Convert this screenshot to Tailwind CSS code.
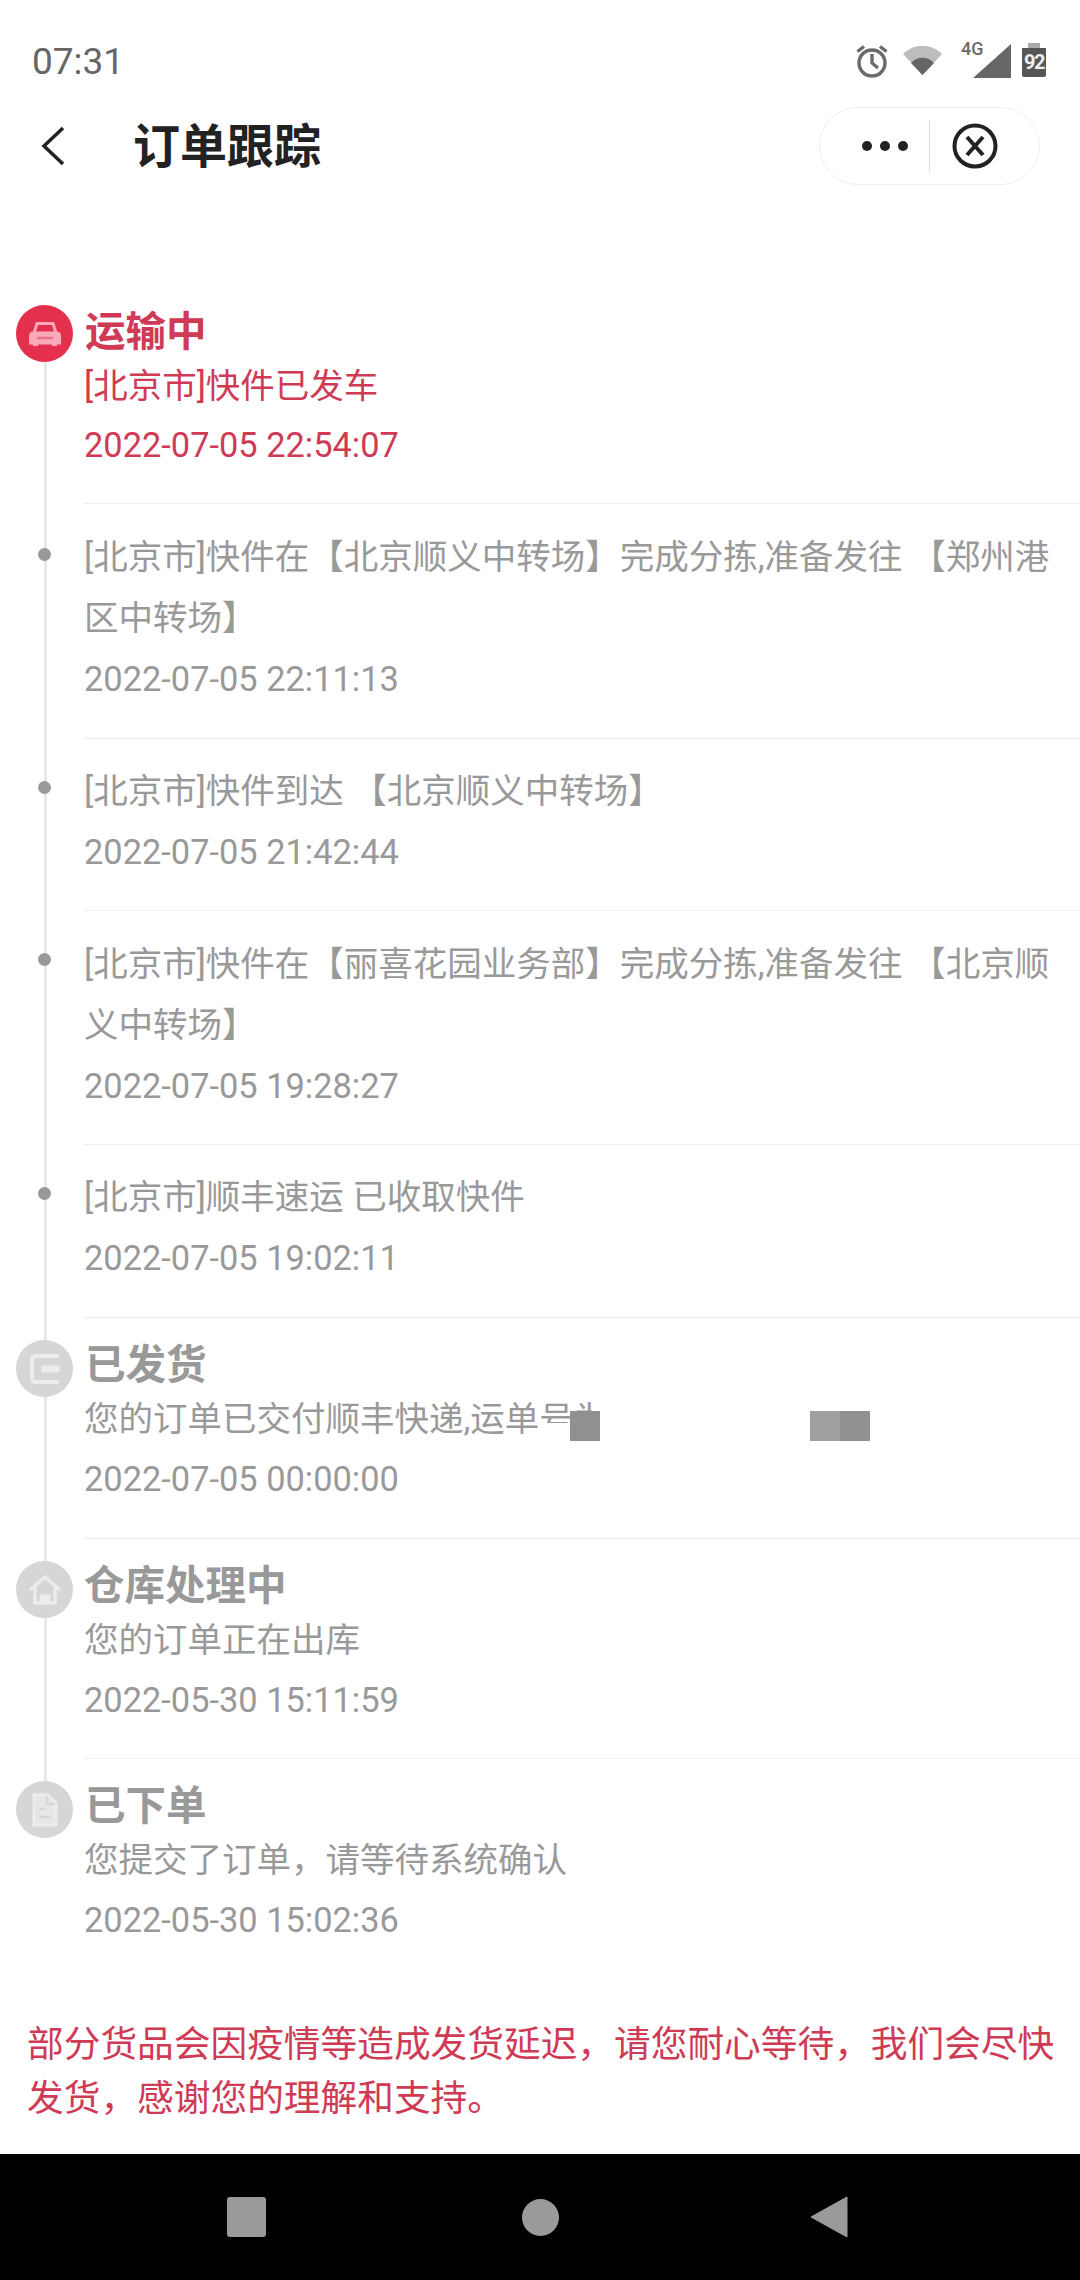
<!DOCTYPE html>
<html lang="zh-CN">
<head>
  <meta charset="UTF-8" />
  <meta name="viewport" content="width=device-width, initial-scale=1.0" />
  <title>订单跟踪</title>
  <script src="https://cdn.jsdelivr.net/npm/@tailwindcss/browser@4"></script>
</head>
<body class="bg-white">
  <div class="flex flex-col h-[2280px] w-[1080px] overflow-hidden font-['Roboto','Noto_Sans_CJK_SC',sans-serif]">

    <!-- status bar -->
    <div class="flex justify-between h-[96px] pl-[32px] pr-[34px] pt-[42px]">
      <span class="text-[37px] leading-[40px] text-[#666]">07:31</span>
      <div class="flex items-start">
        <svg class="w-[32px] h-[34px] mt-[2px]" viewBox="0 0 32 34" fill="none" stroke="#6a6a6a" stroke-width="3.4">
          <circle cx="16" cy="19" r="13" />
          <path d="M16 10v9l6 5M1.5 7.5 8 2.5M30.500 7.500 24 2.500" />
        </svg>
        <svg class="w-[39px] h-[30px] mt-[3px] ml-[15px]" viewBox="0 0 39 30">
          <path d="M0 9C11 -2 28 -2 39 9L19.500 30z" fill="#bdbdbd" />
          <path d="M8 18C14 11 25 11 31 18L19.500 30z" fill="#666" />
        </svg>
        <div class="relative w-[50px] h-[36px] ml-[19px]">
          <span class="absolute left-0 top-[-2px] text-[18px] leading-[18px] font-medium text-[#6a6a6a]">4G</span>
          <svg class="absolute right-0 top-[2px] w-[38px] h-[34px]" viewBox="0 0 38 34">
            <path d="M38 0V34H0z" fill="#666" />
          </svg>
        </div>
        <div class="flex flex-col items-center w-[24px] ml-[11px] mt-[1px]">
          <div class="w-[12px] h-[5px] bg-[#aaa]"></div>
          <div class="flex justify-center w-[24px] h-[29px] pt-[2px] rounded-b-[2px] bg-[#555] text-[20px] leading-[24px] font-bold tracking-[-1.5px] text-[#eee]">92</div>
        </div>
      </div>
    </div>

    <!-- title bar -->
    <div class="flex items-center h-[100px] pl-[41px]">
      <svg class="w-[24px] h-[40px]" viewBox="0 0 24 40" fill="none" stroke="#222" stroke-width="3.500">
        <path d="M22 2 3 20l19 18" />
      </svg>
      <h1 class="ml-[68px] pt-[2px] text-[47px] leading-[60px] font-bold text-[#222]">订单跟踪</h1>
      <div class="flex items-center ml-auto mr-[40px] w-[221px] h-[78px] rounded-full border border-[#eeeeee]">
        <div class="flex items-center gap-[8px] ml-[42px]">
          <span class="w-[10px] h-[10px] rounded-full bg-[#222]"></span>
          <span class="w-[10px] h-[10px] rounded-full bg-[#222]"></span>
          <span class="w-[10px] h-[10px] rounded-full bg-[#222]"></span>
        </div>
        <div class="w-px h-[52px] ml-[21px] bg-[#ddd]"></div>
        <svg class="w-[46px] h-[46px] ml-[22px]" viewBox="0 0 46 46" fill="none" stroke="#222" stroke-width="4">
          <circle cx="23" cy="23" r="20.500" />
          <path d="M15 14 31 32M31 14 15 32" />
        </svg>
      </div>
    </div>

    <!-- timeline -->
    <div class="relative mt-[86px]">
      <div class="absolute left-[44px] top-[60px] w-[3px] h-[1440px] bg-[#e8e8e8]"></div>

      <div class="relative flex">
        <div class="w-[84px] shrink-0 pl-[16px] pt-[23px]">
          <div class="flex items-center justify-center w-[57px] h-[57px] rounded-full bg-[#e5304d]">
            <svg class="w-[34px] h-[26px] blur-[0.6px]" viewBox="0 0 34 26" fill="none" stroke="#f7aab7" stroke-width="3">
              <path d="M6 12 9 2.500h16L28 12" />
              <path d="M2.500 15q0-3 3-3h23q3 0 3 3v7h-29z" fill="#f7aab7" />
              <path d="M9 17h16" stroke="#e8708a" stroke-width="2.500" />
              <path d="M5 23h5M24 23h5" stroke-width="4" />
            </svg>
          </div>
        </div>
        <div class="flex-1 pt-[25px] pb-[27px] pr-[25px] border-b border-[#eeeeee] text-[#cf3a55]">
          <div class="pl-px text-[40.500px] leading-[50px] font-bold">运输中</div>
          <div class="text-[34.500px] leading-[58px]">[北京市]快件已发车</div>
          <div class="text-[34.400px] leading-[61px]">2022-07-05 22:54:07</div>
        </div>
      </div>

      <div class="relative flex">
        <div class="w-[84px] shrink-0 pl-[38px] pt-[44px]"><div class="w-[13px] h-[13px] rounded-full bg-[#999]"></div></div>
        <div class="flex-1 pt-[23px] pb-[28px] pr-[25px] border-b border-[#eeeeee] text-[#999]">
          <div class="text-[34.500px] leading-[61px]">[北京市]快件在【北京顺义中转场】完成分拣,准备发往 【郑州港区中转场】</div>
          <div class="text-[34.400px] leading-[61px]">2022-07-05 22:11:13</div>
        </div>
      </div>

      <div class="relative flex">
        <div class="w-[84px] shrink-0 pl-[38px] pt-[42px]"><div class="w-[13px] h-[13px] rounded-full bg-[#999]"></div></div>
        <div class="flex-1 pt-[22px] pb-[27px] pr-[25px] border-b border-[#eeeeee] text-[#999]">
          <div class="text-[34.500px] leading-[61px]">[北京市]快件到达 【北京顺义中转场】</div>
          <div class="text-[34.400px] leading-[61px]">2022-07-05 21:42:44</div>
        </div>
      </div>

      <div class="relative flex">
        <div class="w-[84px] shrink-0 pl-[38px] pt-[42px]"><div class="w-[13px] h-[13px] rounded-full bg-[#999]"></div></div>
        <div class="flex-1 pt-[23px] pb-[27px] pr-[25px] border-b border-[#eeeeee] text-[#999]">
          <div class="text-[34.500px] leading-[61px]">[北京市]快件在【丽喜花园业务部】完成分拣,准备发往 【北京顺义中转场】</div>
          <div class="text-[34.400px] leading-[61px]">2022-07-05 19:28:27</div>
        </div>
      </div>

      <div class="relative flex">
        <div class="w-[84px] shrink-0 pl-[38px] pt-[42px]"><div class="w-[13px] h-[13px] rounded-full bg-[#999]"></div></div>
        <div class="flex-1 pt-[22px] pb-[28px] pr-[25px] border-b border-[#eeeeee] text-[#999]">
          <div class="text-[34.500px] leading-[61px]">[北京市]顺丰速运 已收取快件</div>
          <div class="text-[34.400px] leading-[61px]">2022-07-05 19:02:11</div>
        </div>
      </div>

      <div class="relative flex">
        <div class="w-[84px] shrink-0 pl-[16px] pt-[22px]">
          <div class="flex items-center justify-center w-[57px] h-[57px] rounded-full bg-[#d6d6d6]">
            <svg class="w-[32px] h-[32px] blur-[0.6px]" viewBox="0 0 32 32" fill="none" stroke="#ececec" stroke-width="4">
              <path d="M30 3H7Q3 3 3 7v18q0 4 4 4h23" />
              <path d="M13 13h17v6H13z" fill="#ececec" stroke-width="1" />
            </svg>
          </div>
        </div>
        <div class="flex-1 pt-[23px] pb-[28px] pr-[25px] border-b border-[#eeeeee] text-[#999]">
          <div class="pl-px text-[40.500px] leading-[48px] font-bold">已发货</div>
          <div class="relative text-[34.500px] leading-[60px]">
            您的订单已交付顺丰快递,运单号为
            <!-- masked waybill number -->
            <div class="absolute left-[456px] top-[34px] w-[30px] h-[26px] bg-white"></div>
            <div class="absolute left-[508px] top-0 w-[40px] h-[60px] bg-white"></div>
            <div class="absolute left-[486px] top-[22px] w-[30px] h-[30px] bg-[#8e9091]"></div>
            <div class="absolute left-[726px] top-[22px] w-[30px] h-[30px] bg-[#9f9f9f]"></div>
            <div class="absolute left-[756px] top-[22px] w-[30px] h-[30px] bg-[#8f9192]"></div>
          </div>
          <div class="text-[34.400px] leading-[61px]">2022-07-05 00:00:00</div>
        </div>
      </div>

      <div class="relative flex">
        <div class="w-[84px] shrink-0 pl-[16px] pt-[22px]">
          <div class="flex items-center justify-center w-[57px] h-[57px] rounded-full bg-[#d6d6d6]">
            <svg class="w-[34px] h-[30px] blur-[0.6px]" viewBox="0 0 34 30" fill="none" stroke="#ececec" stroke-width="3.500">
              <path d="M2 15 17 2l15 13M7 12v16h20V12" />
              <path d="M12 20h10v8H12z" fill="#ececec" stroke-width="1" />
            </svg>
          </div>
        </div>
        <div class="flex-1 pt-[23px] pb-[27px] pr-[25px] border-b border-[#eeeeee] text-[#999]">
          <div class="text-[40.500px] leading-[48px] font-bold">仓库处理中</div>
          <div class="text-[34.500px] leading-[60px]">您的订单正在出库</div>
          <div class="text-[34.400px] leading-[61px]">2022-05-30 15:11:59</div>
        </div>
      </div>

      <div class="relative flex">
        <div class="w-[84px] shrink-0 pl-[16px] pt-[22px]">
          <div class="flex items-center justify-center w-[57px] h-[57px] rounded-full bg-[#d6d6d6]">
            <svg class="w-[26px] h-[34px] blur-[0.6px]" viewBox="0 0 26 34" fill="none" stroke="#ececec" stroke-width="3">
              <path d="M2 2h14l8 8v22H2z" fill="#e6e6e6" />
              <path d="M15 3v8h8M7 16h6M7 24h12" stroke="#d6d6d6" stroke-width="2.500" />
            </svg>
          </div>
        </div>
        <div class="flex-1 pt-[23px] pb-[29px] pr-[25px] text-[#999]">
          <div class="pl-px text-[40.500px] leading-[48px] font-bold">已下单</div>
          <div class="text-[34.500px] leading-[60px]">您提交了订单，请等待系统确认</div>
          <div class="text-[34.400px] leading-[61px]">2022-05-30 15:02:36</div>
        </div>
      </div>
    </div>

    <!-- notice -->
    <p class="pt-[38px] pl-[27px] pr-[20px] text-[36.700px] leading-[54px] text-[#cf3a55]">部分货品会因疫情等造成发货延迟，请您耐心等待，我们会尽快发货，感谢您的理解和支持。</p>

    <!-- android nav bar -->
    <div class="relative flex items-center h-[126px] mt-auto bg-black">
      <div class="ml-[227px] w-[39px] h-[40px] rounded-[3px] bg-[#9a9a9a]"></div>
      <div class="ml-[256px] w-[37px] h-[37px] rounded-full bg-[#9a9a9a]"></div>
      <svg class="ml-[251px] w-[38px] h-[42px]" viewBox="0 0 38 42">
        <path d="M37 1 1 21l36 20z" fill="#9a9a9a" stroke="#9a9a9a" stroke-width="1" stroke-linejoin="round" />
      </svg>
    </div>
  </div>
</body>
</html>
